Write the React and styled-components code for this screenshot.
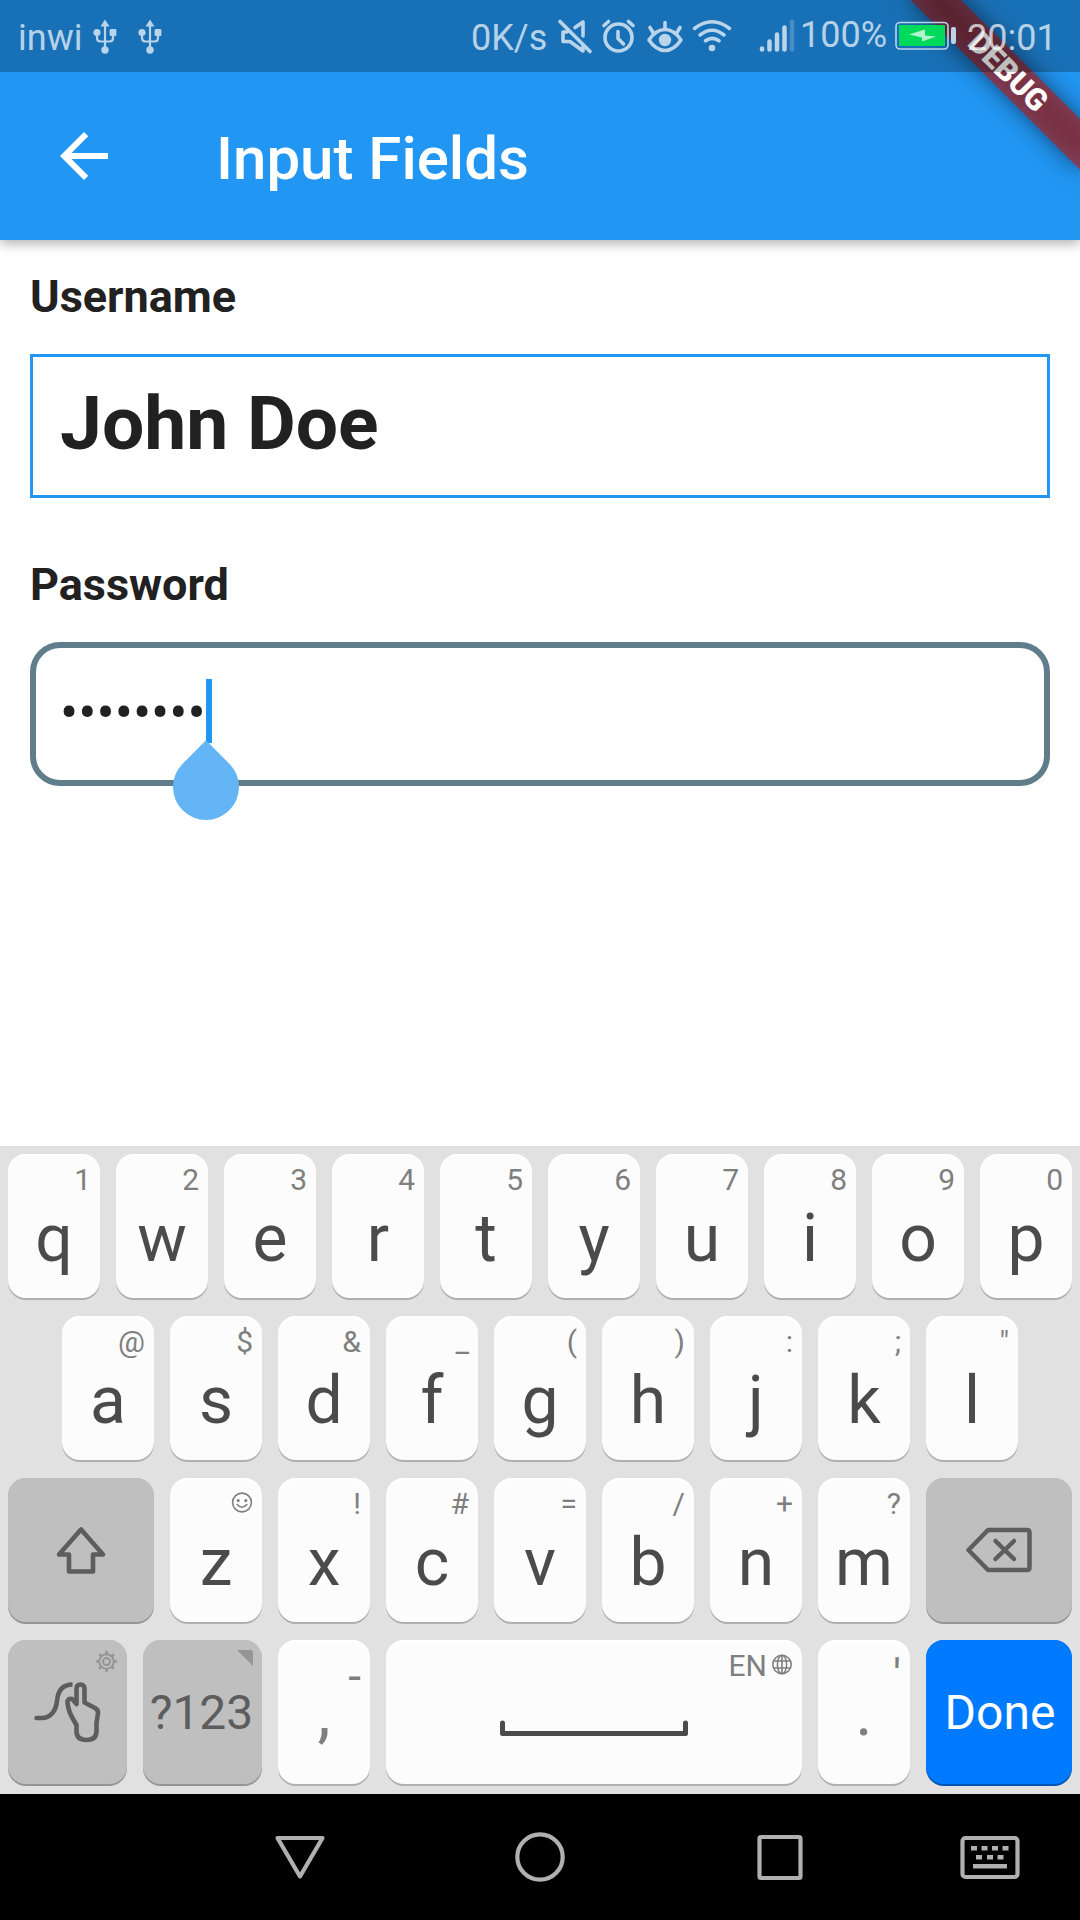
import React from 'react';
import styled, { createGlobalStyle } from 'styled-components';

const Global = createGlobalStyle`
  html, body { margin: 0; padding: 0; background: #fff; }
  * { box-sizing: border-box; }
`;

const Screen = styled.div`
  position: relative;
  width: 1080px;
  height: 1920px;
  overflow: hidden;
  display: flex;
  flex-direction: column;
  background: #fff;
  font-family: Roboto, 'Liberation Sans', sans-serif;
`;

const Header = styled.header`
  position: relative;
  height: 240px;
  flex: none;
  display: flex;
  flex-direction: column;
  background: #2196f3;
  box-shadow: 0 4px 9px rgba(0, 0, 0, 0.2), 0 3px 16px rgba(0, 0, 0, 0.12);
`;

const StatusBar = styled.div`
  position: relative;
  z-index: 3;
  height: 72px;
  flex: none;
  display: flex;
  align-items: flex-start;
  background: rgba(0, 0, 0, 0.25);
  color: rgba(255, 255, 255, 0.7);
  font-size: 36px;
  line-height: 42px;
`;

const StatusText = styled.span`
  flex: none;
  width: ${(p) => p.$w}px;
  margin-left: ${(p) => p.$ml || 0}px;
  margin-top: ${(p) => p.$mt || 17}px;
  white-space: nowrap;
`;

const StatusIcon = styled.svg`
  flex: none;
  display: block;
  margin-left: ${(p) => p.$ml || 0}px;
`;

const Toolbar = styled.div`
  height: 168px;
  flex: none;
  display: flex;
  align-items: center;
  padding-left: 48px;
  color: #fff;
`;

const Title = styled.h1`
  margin: 5px 0 0 96px;
  font-size: 60px;
  font-weight: 500;
  line-height: 70px;
`;

const BannerClip = styled.div`
  position: absolute;
  z-index: 2;
  top: 0;
  right: 0;
  width: 240px;
  height: 240px;
  overflow: hidden;
`;

const DebugBanner = styled.div`
  position: absolute;
  left: 120px;
  top: 84px;
  width: 240px;
  height: 36px;
  transform-origin: 120px -84px;
  transform: rotate(45deg);
  color: #fff;
  font-size: 30.6px;
  font-weight: 900;
  line-height: 35px;
  text-align: center;

  &::before {
    content: '';
    position: absolute;
    z-index: -2;
    inset: 0;
    background: rgba(0, 0, 0, 0.5);
    filter: blur(12px);
  }

  &::after {
    content: '';
    position: absolute;
    z-index: -1;
    inset: 0;
    background: rgba(183, 28, 28, 0.63);
  }
`;

const Form = styled.main`
  flex: 1;
  padding: 0 30px;
`;

const Label = styled.label`
  display: block;
  padding-top: ${(p) => p.$pt}px;
  height: ${(p) => p.$h}px;
  font-size: 45px;
  font-weight: 700;
  line-height: 53px;
  color: #212121;
`;

const Field = styled.div`
  height: 144px;
  display: flex;
  align-items: center;
  padding-left: ${(p) => 30 - p.$bw}px;
  border: ${(p) => p.$bw}px solid ${(p) => p.$color};
  border-radius: ${(p) => p.$radius}px;
  color: #212121;
`;

const FieldText = styled.span`
  font-size: ${(p) => p.$size}px;
  font-weight: ${(p) => p.$weight};
  line-height: 88px;
  margin-top: ${(p) => p.$mt}px;
`;

const Caret = styled.span`
  position: relative;
  width: 6px;
  height: 64px;
  margin-top: -6px;
  background: #2196f3;
`;

const CaretHandle = styled.span`
  position: absolute;
  left: -33px;
  top: 75px;
  width: 66px;
  height: 66px;
  border-radius: 0 50% 50% 50%;
  transform: rotate(45deg);
  background: #64b5f6;
`;

const Keyboard = styled.section`
  flex: none;
  height: 648px;
  padding-top: 8px;
  display: flex;
  flex-direction: column;
  gap: 18px;
  background: #e1e1e1;
`;

const KeyRow = styled.div`
  display: flex;
  justify-content: center;
  gap: 16px;
  height: 144px;
`;

const tones = {
  light: { bg: '#fcfcfc', shadow: '#b0b0b0', top: '#ffffff', fg: '#4b4b4b' },
  dark: { bg: '#bfbfbf', shadow: '#959595', top: '#bfbfbf', fg: '#5d5d5d' },
  blue: { bg: '#007aff', shadow: '#0055b3', top: '#007aff', fg: '#ffffff' },
};

const KeyCap = styled.div`
  width: ${(p) => p.$w || 92}px;
  height: 144px;
  flex: none;
  display: flex;
  flex-direction: column;
  align-items: center;
  border-radius: 18px;
  background: ${(p) => tones[p.$tone || 'light'].bg};
  color: ${(p) => tones[p.$tone || 'light'].fg};
  box-shadow: 0 2px 0 ${(p) => tones[p.$tone || 'light'].shadow},
    inset 0 2px 0 ${(p) => tones[p.$tone || 'light'].top};
`;

const Hint = styled.div`
  align-self: stretch;
  height: 38px;
  flex: none;
  display: flex;
  justify-content: flex-end;
  gap: 5px;
  padding: ${(p) => (p.$big ? 24 : 14)}px 9px 0 0;
  font-size: ${(p) => (p.$big ? 46 : 30)}px;
  line-height: 24px;
  color: #7f7f7f;
`;

const Letter = styled.div`
  margin-top: 14px;
  font-size: 66px;
  line-height: 66px;
`;

const Punct = styled.div`
  margin-top: 2px;
  font-size: 66px;
  line-height: 66px;
  color: #7f7f7f;
`;

const Word = styled.div`
  margin-top: 5px;
  padding-left: ${(p) => p.$pl || 0}px;
  padding-right: ${(p) => p.$pr || 0}px;
  font-size: 48px;
  line-height: 60px;
`;

const KeyArt = styled.svg`
  display: block;
  flex: none;
`;

const NavBar = styled.nav`
  flex: none;
  height: 126px;
  background: #000;
`;

const NavArt = styled.svg`
  display: block;
`;

const Usb = ({ ml }) => (
  <StatusIcon $ml={ml} width="24" height="72" viewBox="0 0 24 72" fill="#bad4ea" stroke="#bad4ea">
    <path d="M12 19.500l4.500 7H7.500z" stroke="none" />
    <path d="M12 25V50M4 33v5q0 3.500 3.500 3.500h9q3.500 0 3.500-3.500v-5" fill="none" strokeWidth="2.200" />
    <circle cx="4" cy="32.500" r="3.600" stroke="none" />
    <rect x="16.600" y="29" width="6.800" height="7" rx="1" stroke="none" />
    <circle cx="12" cy="50" r="3.700" stroke="none" />
  </StatusIcon>
);

/* Drawn in screen coordinates: starts at x = 555 */
const StatusGlyphs = () => (
  <StatusIcon width="245" height="72" viewBox="555 0 245 72" fill="none" stroke="#bad4ea" strokeWidth="3.600" strokeLinecap="round" strokeLinejoin="round">
    <path d="M560 21.500L590 51.500M575 27.500l8-5.500V36M583 45.500V51L570 41.500h-7V32h4" />
    <circle cx="618.500" cy="37.500" r="13.500" />
    <path d="M618 31.500v7l5.500 5.500M604 25.500l4.500-4M633 25.500l-4.500-4" />
    <path d="M649 40q7-10.500 16-10.500T681 40q-7 10.500-16 10.500T649 40z" />
    <circle cx="665" cy="40" r="6.200" fill="#bad4ea" stroke="none" />
    <path d="M665 22.500v6M650 27.500l3 5M680 27.500l-3 5" />
    <path d="M694.500 28.500q17.500-13.500 35 0M700 35q12-9.500 24 0M705.500 40.800q6.800-5 13.500 0" />
    <circle cx="712" cy="48" r="3.300" fill="#bad4ea" stroke="none" />
    <g strokeWidth="4.500">
      <path d="M762 48.500v1M769.500 41.500v8M777 34.500v15M784.500 27.500v22" />
      <path d="M792 21.500v28" opacity="0.300" />
    </g>
  </StatusIcon>
);

const Battery = () => (
  <StatusIcon $ml={7} width="64" height="72" viewBox="0 0 64 72">
    <rect x="2" y="22.500" width="52" height="26.500" rx="4" fill="none" stroke="#bad4ea" strokeWidth="1.600" />
    <rect x="5" y="25" width="46" height="21" fill="#00d95a" />
    <path d="M15 34.500l13 3v4l14-5-11-1v-6z" fill="#b2f4cd" />
    <rect x="57" y="27" width="5" height="17" rx="2" fill="#bad4ea" />
  </StatusIcon>
);

const Smiley = () => (
  <KeyArt width="22" height="24" viewBox="0 0 22 24" fill="none" stroke="#7f7f7f" strokeWidth="1.600">
    <circle cx="11" cy="10.500" r="9.400" />
    <path d="M6.200 12.500q4.800 5.500 9.600 0" strokeLinecap="round" />
    <circle cx="7.200" cy="8.500" r="0.800" fill="#7f7f7f" />
    <circle cx="14.800" cy="8.500" r="0.800" fill="#7f7f7f" />
  </KeyArt>
);

const Globe = () => (
  <KeyArt width="21" height="24" viewBox="0 0 21 24" fill="none" stroke="#7f7f7f" strokeWidth="1.600">
    <circle cx="10" cy="10.500" r="9.200" />
    <ellipse cx="10" cy="10.500" rx="4.600" ry="9.200" />
    <path d="M10 1.300v18.400M1.800 7h16.400M1.800 14h16.400" />
  </KeyArt>
);

const ShiftArt = () => (
  <KeyArt width="146" height="144" viewBox="0 0 146 144" fill="none" stroke="#5d5d5d" strokeWidth="4.600" strokeLinejoin="round">
    <path d="M73 51.500L95 76.500H85V93.500H61V76.500H51z" />
  </KeyArt>
);

const BackspaceArt = () => (
  <KeyArt width="146" height="144" viewBox="0 0 146 144" fill="none" stroke="#5d5d5d" strokeWidth="4.500" strokeLinejoin="round" strokeLinecap="round">
    <path d="M42.500 72L62 52h39q2.500 0 2.500 2.500v35q0 2.500-2.500 2.500H62z" />
    <path d="M69.500 63l18.500 18M88 63L69.500 81" />
  </KeyArt>
);

const SwypeArt = () => (
  <KeyArt width="119" height="144" viewBox="0 0 119 144" fill="none" stroke="#5d5d5d" strokeWidth="4.600" strokeLinejoin="round">
    <g stroke="#959595" strokeWidth="2" strokeLinecap="round">
      <circle cx="98.500" cy="21.500" r="7.300" />
      <circle cx="98.500" cy="21.500" r="3.500" />
      <path strokeWidth="2.600" d="M98.500 13.500v-1.500M98.500 29.500v1.500M90.500 21.500h-1.500M106.500 21.500h1.500M92.800 15.800l-1-1M104.200 27.200l1 1M104.200 15.800l1-1M92.800 27.200l-1 1" />
    </g>
    <path d="M28.500 78h5c9 0 14.500-7 15.500-17 1-11 6-16.500 15.500-16.500" />
    <circle cx="28.500" cy="78" r="2.300" fill="#5d5d5d" stroke="none" />
    <path d="M68.500 64V49q0-4.500 4-4.500t4 4.500v13.500L87 68q3.500 2 3 5.500l-1.500 9.500v8q0 9-10 9t-10-9v-6l-3.500-6c-3.500-6-5-11-5.500-16.500q0-4.500 4.500-3.500l4.500 5z" />
  </KeyArt>
);

const CornerArt = () => (
  <KeyArt width="119" height="38" viewBox="0 0 119 38">
    <path d="M94 10h13q3 0 3 3v13z" fill="#959595" />
  </KeyArt>
);

const SpaceArt = () => (
  <KeyArt width="416" height="106" viewBox="0 0 416 106" fill="none" stroke="#4b4b4b" strokeWidth="5" strokeLinecap="round" strokeLinejoin="round">
    <path d="M116.500 45v10.500h183V45" />
  </KeyArt>
);

const row1 = [['q', '1'], ['w', '2'], ['e', '3'], ['r', '4'], ['t', '5'], ['y', '6'], ['u', '7'], ['i', '8'], ['o', '9'], ['p', '0']];
const row2 = [['a', '@'], ['s', '$'], ['d', '&'], ['f', '_'], ['g', '('], ['h', ')'], ['j', ':'], ['k', ';'], ['l', '"']];
const row3 = [['z', <Smiley key="s" />], ['x', '!'], ['c', '#'], ['v', '='], ['b', '/'], ['n', '+'], ['m', '?']];

const LetterKey = ({ letter, hint }) => (
  <KeyCap>
    <Hint>{hint}</Hint>
    <Letter>{letter}</Letter>
  </KeyCap>
);

const letters = (row) => row.map(([l, h]) => <LetterKey key={l} letter={l} hint={h} />);

export default function App() {
  return (
    <Screen>
      <Global />
      <Header>
        <StatusBar>
          <StatusText $ml={18} $w={67}>inwi</StatusText>
          <Usb ml={8} />
          <Usb ml={21} />
          <StatusText $ml={309} $w={84}>0K/s</StatusText>
          <StatusGlyphs />
          <StatusText $w={87} $mt={14}>100%</StatusText>
          <Battery />
          <StatusText $ml={9} $w={100}>20:01</StatusText>
        </StatusBar>
        <Toolbar>
          <svg width="72" height="72" viewBox="0 0 24 24" fill="currentColor">
            <path d="M20 11H7.830l5.590-5.590L12 4l-8 8 8 8 1.410-1.410L7.830 13H20v-2z" />
          </svg>
          <Title>Input Fields</Title>
        </Toolbar>
        <BannerClip>
          <DebugBanner>DEBUG</DebugBanner>
        </BannerClip>
      </Header>
      <Form>
        <Label $pt={30} $h={114}>Username</Label>
        <Field $bw={3} $radius={0} $color="#2196f3">
          <FieldText $size={75} $weight={700} $mt={-6}>John Doe</FieldText>
        </Field>
        <Label $pt={60} $h={144}>Password</Label>
        <Field $bw={6} $radius={30} $color="#607d8b">
          <FieldText $size={54} $weight={400} $mt={-2}>••••••••</FieldText>
          <Caret>
            <CaretHandle />
          </Caret>
        </Field>
      </Form>
      <Keyboard>
        <KeyRow>{letters(row1)}</KeyRow>
        <KeyRow>{letters(row2)}</KeyRow>
        <KeyRow>
          <KeyCap $w={146} $tone="dark"><ShiftArt /></KeyCap>
          {letters(row3)}
          <KeyCap $w={146} $tone="dark"><BackspaceArt /></KeyCap>
        </KeyRow>
        <KeyRow>
          <KeyCap $w={119} $tone="dark"><SwypeArt /></KeyCap>
          <KeyCap $w={119} $tone="dark">
            <CornerArt />
            <Word $pr={2}>?123</Word>
          </KeyCap>
          <KeyCap>
            <Hint $big>-</Hint>
            <Punct>,</Punct>
          </KeyCap>
          <KeyCap $w={416}>
            <Hint>EN<Globe /></Hint>
            <SpaceArt />
          </KeyCap>
          <KeyCap>
            <Hint $big>'</Hint>
            <Punct>.</Punct>
          </KeyCap>
          <KeyCap $w={146} $tone="blue">
            <Hint />
            <Word $pl={2}>Done</Word>
          </KeyCap>
        </KeyRow>
      </Keyboard>
      <NavBar>
        <NavArt width="1080" height="126" viewBox="0 1794 1080 126" fill="none" stroke="#b0b0b0" strokeWidth="4.200" strokeLinejoin="round">
          <path d="M277.500 1838h45L300 1876.500z" />
          <circle cx="540" cy="1857" r="22.700" />
          <rect x="759.500" y="1837" width="41" height="41" rx="1.500" />
          <rect x="962.500" y="1838" width="55" height="39" rx="3" />
          <g fill="#b0b0b0" stroke="none">
            <path d="M971 1846h6v4.500h-6zM981.500 1846h6v4.500h-6zM992 1846h6v4.500h-6zM1002.500 1846h6v4.500h-6z" />
            <path d="M976 1855h6v4.500h-6zM987 1855h6v4.500h-6zM997.500 1855h6v4.500h-6zM973 1864h34v4.500h-34z" />
          </g>
        </NavArt>
      </NavBar>
    </Screen>
  );
}
